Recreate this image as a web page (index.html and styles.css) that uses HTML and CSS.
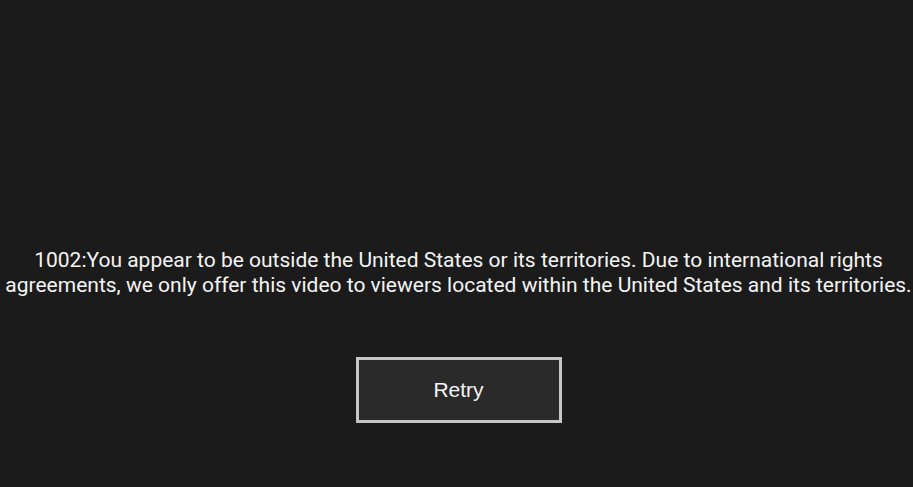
FILE: index.html
```html
<!DOCTYPE html>
<html>
<head>
    <title>Video unavailable</title>
    <link rel="stylesheet" href="styles.css">
</head>
<body>
    <div class="error-screen">
        <p class="error-text">1002:You appear to be outside the United States or its territories. Due to international rights agreements, we only offer this video to viewers located within the United States and its territories.</p>
        <button class="retry-btn">Retry</button>
    </div>
</body>
</html>
```

FILE: styles.css
```css
* {
    box-sizing: border-box;
    margin: 0;
    padding: 0;
}

body {
    background: #1b1b1b;
    width: 913px;
    height: 487px;
    overflow: hidden;
}

.error-screen {
    display: flex;
    flex-direction: column;
    align-items: center;
    padding-top: 248px;
    padding-left: 4px;
}

.error-text {
    font-family: 'Roboto', sans-serif;
    font-size: 21px;
    line-height: 25px;
    color: #f4f4f4;
    text-align: center;
    width: 913px;
}

.retry-btn {
    margin-top: 59px;
    width: 206px;
    height: 66px;
    background: #2a2a2a;
    border: 3px solid #c6c6c6;
    color: #f4f4f4;
    font-family: 'Liberation Sans', Arial, sans-serif;
    font-size: 21px;
    cursor: pointer;
}
```
